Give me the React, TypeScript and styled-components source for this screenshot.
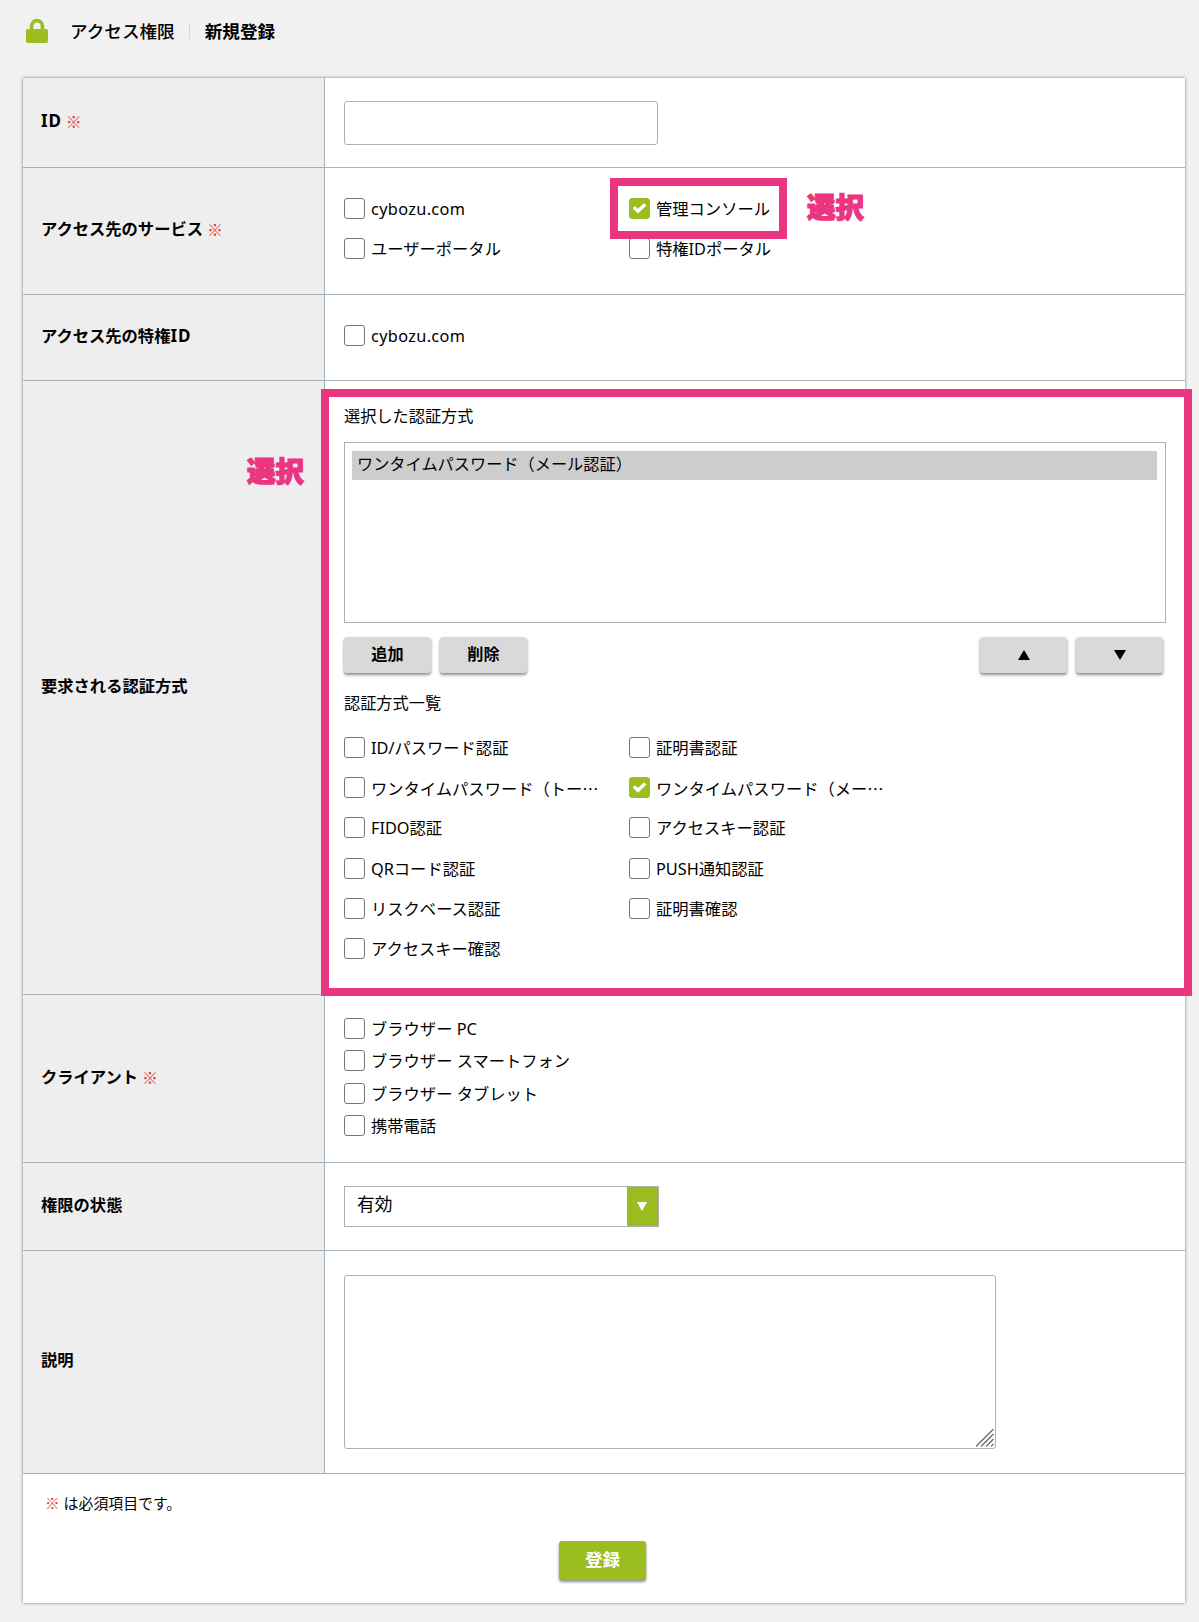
import React from "react";
import styled, { createGlobalStyle } from "styled-components";

const sans = `"Noto Sans", "Noto Sans CJK JP", sans-serif`;
const green = "#9bbd20";
const pink = "#eb3580";
const line = "#a3b2bc";

const GlobalStyle = createGlobalStyle`
  * { box-sizing: border-box; }
  body {
    margin: 0;
    background: #f1f1f1;
    color: #000;
    font-family: ${sans};
    font-size: 16.3px;
  }
  button, input, textarea { font: inherit; }
`;

const Page = styled.div`
  position: relative;
  width: 1199px;
  height: 1622px;
  overflow: hidden;
`;

const Header = styled.header`
  display: flex;
  align-items: center;
  height: 78px;
  padding: 0 0 16px 26px;
  font-size: 17.6px;
  line-height: 26px;
`;

const LockIcon = styled.svg`
  width: 22px;
  height: 24px;
  margin-right: 22px;
`;

const Crumb = styled.span<{ $weight: number }>`
  padding-bottom: 1px;
  font-weight: ${(p) => p.$weight};
`;

const Divider = styled.span`
  width: 1px;
  height: 15px;
  margin: 0 15px 0 14px;
  background: #d5d5d5;
`;

const Card = styled.form`
  width: 1162px;
  margin-left: 23px;
  background: #fff;
  box-shadow: 0 0 3px rgba(0, 0, 0, 0.5);
`;

const Row = styled.section<{ $height: number }>`
  display: grid;
  grid-template-columns: 302px 1fr;
  height: ${(p) => p.$height}px;
  border-bottom: 1px solid ${line};
`;

const Label = styled.div`
  display: flex;
  align-items: center;
  gap: 4px;
  padding: 0 0 4px 18px;
  background: #eee;
  border-right: 1px solid ${line};
  font-weight: 700;
  line-height: 24px;
  white-space: nowrap;
`;

const BoldLatin = styled.span`
  font-size: 17px;
  letter-spacing: 0.9px;
`;

const Mark = styled.span`
  color: #e23b3b;
  font-family: "Noto Sans CJK JP", sans-serif;
  font-size: 0.98em;
  font-weight: 400;
`;

const Content = styled.div<{ $top: number }>`
  padding: ${(p) => p.$top}px 19px 0;
`;

const TextInput = styled.input`
  display: block;
  width: 314px;
  height: 44px;
  border: 1px solid #b0b0b0;
  border-radius: 3px;
  outline: none;
`;

const CheckGrid = styled.div<{ $columns: number; $pitch: number }>`
  display: grid;
  grid-template-columns: repeat(${(p) => p.$columns}, 285px);
  grid-auto-rows: ${(p) => p.$pitch}px;
`;

const CheckLabel = styled.label`
  display: flex;
  align-items: flex-start;
  gap: 6px;
  line-height: 22px;
  white-space: nowrap;
`;

const CheckInput = styled.input`
  display: grid;
  place-items: center;
  flex: none;
  width: 21px;
  height: 21px;
  margin: 0;
  appearance: none;
  background: #fff;
  border: 1px solid #777;
  border-radius: 3px;

  &:checked {
    background: ${green};
    border-color: ${green};
  }
  &:checked::before {
    content: "";
    width: 14px;
    height: 11px;
    background: #fff;
    clip-path: polygon(0 48%, 17% 28%, 38% 52%, 82% 2%, 100% 22%, 39% 96%);
  }
`;

const CheckText = styled.span<{ $clipped: boolean; $latin: boolean }>`
  font-family: ${(p) => (p.$clipped ? `"Noto Sans CJK JP", sans-serif` : sans)};
  letter-spacing: ${(p) => (p.$latin ? "0.35px" : "normal")};
`;

const Caption = styled.div`
  font-size: 16.2px;
  line-height: 24px;
`;

const SelectedList = styled.div`
  width: 822px;
  height: 181px;
  margin: 14px 0;
  padding: 8px 8px 0 7px;
  border: 1px solid #b0b0b0;
`;

const SelectedItem = styled.div`
  height: 29px;
  padding-left: 5px;
  background: #cdcdcd;
  font-size: 16.2px;
  line-height: 26px;
`;

const Toolbar = styled.div`
  display: flex;
  justify-content: space-between;
  width: 819px;
  margin-bottom: 18px;
`;

const ButtonGroup = styled.div`
  display: flex;
  gap: 9px;
`;

const Button = styled.button<{ $primary?: boolean }>`
  display: flex;
  align-items: center;
  justify-content: center;
  width: 87px;
  height: ${(p) => (p.$primary ? 39 : 36)}px;
  padding: 0 0 4px;
  border: 0;
  border-radius: 3px;
  background: ${(p) => (p.$primary ? green : "#d9d9d9")};
  box-shadow: 0 2px 3px rgba(0, 0, 0, 0.45);
  color: ${(p) => (p.$primary ? "#fff" : "#000")};
  font-size: ${(p) => (p.$primary ? 17.6 : 16.2)}px;
  font-weight: 700;
`;

const Arrow = styled.svg`
  width: 12px;
  height: 10px;
  margin-top: 3px;
`;

const MethodGrid = styled.div`
  margin-top: 22px;
`;

const Select = styled.div`
  display: flex;
  justify-content: space-between;
  width: 315px;
  height: 41px;
  padding-left: 12px;
  border: 1px solid #b0b0b0;
  font-size: 17.8px;
  line-height: 35px;
`;

const SelectArrow = styled.span`
  display: grid;
  place-items: center;
  width: 31px;
  padding-right: 1px;
  background: ${green};
`;

const AreaWrap = styled.div`
  position: relative;
  width: 652px;
  height: 174px;
`;

const Area = styled.textarea`
  display: block;
  width: 100%;
  height: 100%;
  border: 1px solid #b0b0b0;
  border-radius: 3px;
  outline: none;
  resize: none;
`;

const Grip = styled.svg`
  position: absolute;
  right: 2px;
  bottom: 2px;
  width: 18px;
  height: 18px;
`;

const Footer = styled.footer`
  display: flex;
  flex-direction: column;
  height: 129px;
  padding: 17px 0 0 22px;
`;

const Note = styled.p`
  display: flex;
  gap: 4px;
  margin: 0 0 26px;
  font-size: 14.9px;
  line-height: 24px;
`;

const Submit = styled.div`
  display: flex;
  justify-content: center;
  padding-right: 25px;
`;

const Callout = styled.div<{ $x: number; $y: number; $w: number; $h: number }>`
  position: absolute;
  left: ${(p) => p.$x}px;
  top: ${(p) => p.$y}px;
  width: ${(p) => p.$w}px;
  height: ${(p) => p.$h}px;
  border: 8px solid ${pink};
  pointer-events: none;
`;

const CalloutText = styled.div<{ $x: number; $y: number }>`
  position: absolute;
  left: ${(p) => p.$x}px;
  top: ${(p) => p.$y}px;
  color: ${pink};
  font-family: "Noto Sans CJK JP", sans-serif;
  font-size: 28.4px;
  font-weight: 900;
  line-height: 36px;
  -webkit-text-stroke: 1.2px ${pink};
`;

const Check = ({ text, checked = false }: { text: string; checked?: boolean }) => (
  <CheckLabel>
    <CheckInput type="checkbox" defaultChecked={checked} />
    <CheckText $clipped={text.endsWith("…")} $latin={/^[a-z.]+$/.test(text)}>
      {text}
    </CheckText>
  </CheckLabel>
);

const FieldLabel = ({ text, required = false }: { text: string; required?: boolean }) => (
  <Label>
    <span>
      {text
        .split(/(ID)/)
        .filter(Boolean)
        .map((part) => (part === "ID" ? <BoldLatin key={part}>{part}</BoldLatin> : part))}
    </span>
    {required && <Mark>※</Mark>}
  </Label>
);

const methods = [
  "ID/パスワード認証",
  "証明書認証",
  "ワンタイムパスワード（トー…",
  "ワンタイムパスワード（メー…",
  "FIDO認証",
  "アクセスキー認証",
  "QRコード認証",
  "PUSH通知認証",
  "リスクベース認証",
  "証明書確認",
  "アクセスキー確認",
];

const clients = ["ブラウザー PC", "ブラウザー スマートフォン", "ブラウザー タブレット", "携帯電話"];

export default function App() {
  return (
    <Page lang="ja">
      <GlobalStyle />
      <Header>
        <LockIcon viewBox="0 0 22 24">
          <path d="M5.6 12V7a5.4 5.4 0 0 1 10.8 0V12" fill="none" stroke={green} strokeWidth="3.6" />
          <rect y="10" width="22" height="14" rx="2" fill={green} />
        </LockIcon>
        <Crumb $weight={500}>アクセス権限</Crumb>
        <Divider />
        <Crumb $weight={700}>新規登録</Crumb>
      </Header>
      <Card>
        <Row $height={90}>
          <FieldLabel text="ID" required />
          <Content $top={23}>
            <TextInput />
          </Content>
        </Row>
        <Row $height={127}>
          <FieldLabel text="アクセス先のサービス" required />
          <Content $top={30}>
            <CheckGrid $columns={2} $pitch={40}>
              <Check text="cybozu.com" />
              <Check text="管理コンソール" checked />
              <Check text="ユーザーポータル" />
              <Check text="特権IDポータル" />
            </CheckGrid>
          </Content>
        </Row>
        <Row $height={86}>
          <FieldLabel text="アクセス先の特権ID" />
          <Content $top={30}>
            <Check text="cybozu.com" />
          </Content>
        </Row>
        <Row $height={614}>
          <FieldLabel text="要求される認証方式" />
          <Content $top={23}>
            <Caption>選択した認証方式</Caption>
            <SelectedList>
              <SelectedItem>ワンタイムパスワード（メール認証）</SelectedItem>
            </SelectedList>
            <Toolbar>
              <ButtonGroup>
                <Button type="button">追加</Button>
                <Button type="button">削除</Button>
              </ButtonGroup>
              <ButtonGroup>
                <Button type="button" aria-label="上へ">
                  <Arrow viewBox="0 0 12 10"><path d="M6 0l6 10H0z" /></Arrow>
                </Button>
                <Button type="button" aria-label="下へ">
                  <Arrow viewBox="0 0 12 10"><path d="M0 0h12L6 10z" /></Arrow>
                </Button>
              </ButtonGroup>
            </Toolbar>
            <Caption>認証方式一覧</Caption>
            <MethodGrid>
              <CheckGrid $columns={2} $pitch={40.2}>
                {methods.map((m) => (
                  <Check key={m} text={m} checked={m.includes("（メー")} />
                ))}
              </CheckGrid>
            </MethodGrid>
          </Content>
        </Row>
        <Row $height={168}>
          <FieldLabel text="クライアント" required />
          <Content $top={23}>
            <CheckGrid $columns={1} $pitch={32.4}>
              {clients.map((c) => (
                <Check key={c} text={c} />
              ))}
            </CheckGrid>
          </Content>
        </Row>
        <Row $height={88}>
          <FieldLabel text="権限の状態" />
          <Content $top={23}>
            <Select>
              有効
              <SelectArrow>
                <svg width="10" height="9" viewBox="0 0 10 9">
                  <path d="M0 0h10L5 9z" fill="#fff" />
                </svg>
              </SelectArrow>
            </Select>
          </Content>
        </Row>
        <Row $height={223}>
          <FieldLabel text="説明" />
          <Content $top={24}>
            <AreaWrap>
              <Area />
              <Grip viewBox="0 0 18 18">
                <path d="M0 17.5L17.5 0M5 17.5L17.5 5M10 17.5l7.5-7.5M15 17.5l2.5-2.5" stroke="#6b6b70" strokeWidth="1.3" />
              </Grip>
            </AreaWrap>
          </Content>
        </Row>
        <Footer>
          <Note>
            <Mark>※</Mark>
            <span>は必須項目です。</span>
          </Note>
          <Submit>
            <Button type="button" $primary>登録</Button>
          </Submit>
        </Footer>
      </Card>
      <Callout $x={610} $y={178} $w={177} $h={61} />
      <CalloutText $x={807} $y={188}>選択</CalloutText>
      <Callout $x={321} $y={389} $w={871} $h={607} />
      <CalloutText $x={247} $y={452}>選択</CalloutText>
    </Page>
  );
}
